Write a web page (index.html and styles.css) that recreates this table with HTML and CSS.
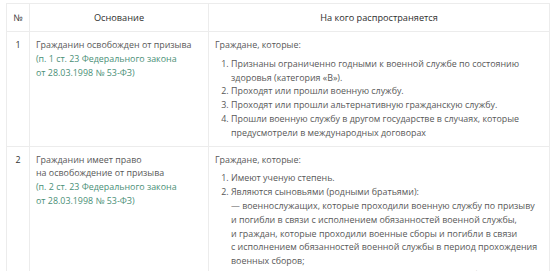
FILE: index.html
```html
<!DOCTYPE html>
<html lang="ru">
<head>
<meta charset="utf-8">
<link rel="stylesheet" href="styles.css">
</head>
<body>
<table class="grid">
  <colgroup>
    <col class="c-num">
    <col class="c-base">
    <col class="c-who">
  </colgroup>
  <thead>
    <tr>
      <th class="num">№</th>
      <th>Основание</th>
      <th>На кого распространяется</th>
    </tr>
  </thead>
  <tbody>
    <tr>
      <td class="num">1</td>
      <td>Гражданин освобожден от призыва<br><span class="ref">(п. 1 ст. 23 Федерального закона<br>от 28.03.1998 № 53-ФЗ)</span></td>
      <td>
        <p class="lead">Граждане, которые:</p>
        <ol class="items">
          <li>Признаны ограниченно годными к военной службе по состоянию<br>здоровья (категория «В»).</li>
          <li>Проходят или прошли военную службу.</li>
          <li>Проходят или прошли альтернативную гражданскую службу.</li>
          <li>Прошли военную службу в другом государстве в случаях, которые<br>предусмотрели в международных договорах</li>
        </ol>
      </td>
    </tr>
    <tr>
      <td class="num">2</td>
      <td>Гражданин имеет право<br>на освобождение от призыва<br><span class="ref">(п. 2 ст. 23 Федерального закона<br>от 28.03.1998 № 53-ФЗ)</span></td>
      <td>
        <p class="lead">Граждане, которые:</p>
        <ol class="items">
          <li>Имеют ученую степень.</li>
          <li>Являются сыновьями (родными братьями):<br>— военнослужащих, которые проходили военную службу по призыву<br>и погибли в связи с исполнением обязанностей военной службы,<br>и граждан, которые проходили военные сборы и погибли в связи<br>с исполнением обязанностей военной службы в период прохождения<br>военных сборов;<br>— военнослужащих, которые проходили военную службу по призыву</li>
        </ol>
      </td>
    </tr>
  </tbody>
</table>
</body>
</html>
```

FILE: styles.css
```css
html, body {
  margin: 0;
  padding: 0;
  background: #ffffff;
}

body {
  padding: 3px 0 0 6px;
  font-family: "Open Sans", Lato, sans-serif;
  font-size: 8.9px;
  line-height: 13.8px;
  color: #585858;
}

.grid {
  border-collapse: collapse;
  table-layout: fixed;
  width: 543px;
}

.c-num { width: 23px; }
.c-base { width: 179px; }
.c-who { width: 341px; }

.grid th,
.grid td {
  border: 1px solid #ececec;
  vertical-align: top;
  text-align: left;
  overflow: hidden;
}

.grid th {
  height: 27px;
  padding: 0 4px;
  vertical-align: middle;
  text-align: center;
  font-size: 9.2px;
  font-weight: 400;
  color: #2e2e2e;
}

.grid td {
  padding: 6px 6px 6px 6px;
  white-space: nowrap;
}

.grid td.num {
  text-align: center;
  padding-left: 0;
  padding-right: 0;
  color: #333333;
}

.ref {
  color: #4a8f77;
}

.lead {
  margin: 0 0 5px 0;
}

.items {
  margin: 0;
  padding: 0 0 0 16px;
}

.items li {
  margin: 0;
}
```
